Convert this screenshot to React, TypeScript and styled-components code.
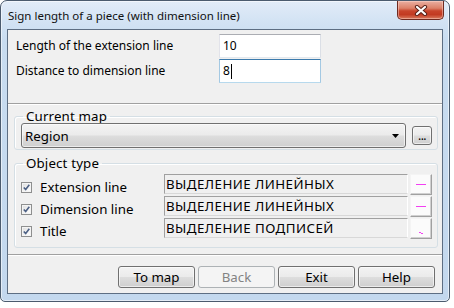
import React from 'react';
import styled, { createGlobalStyle } from 'styled-components';

const Global = createGlobalStyle`
  html, body { margin: 0; padding: 0; background: #ffffff; }
  body { font-family: "Noto Sans", "Liberation Sans", sans-serif; color: #000; }
  #root { width: 454px; height: 308px; }
`;

const Window = styled.div`
  box-sizing: border-box;
  width: 450px;
  height: 302px;
  border: 1px solid #4b5b6e;
  border-radius: 7px 7px 5px 5px;
  background: linear-gradient(180deg, #e2ecf8 0px, #d3e3f4 20px, #c8dcf0 40px, #c3d8ee 100%);
  box-shadow: inset 0 0 0 1px rgba(255, 255, 255, 0.55);
  padding: 0 6px 7px 6px;
  display: flex;
  flex-direction: column;
`;

const TitleBar = styled.div`
  height: 28px;
  display: flex;
  justify-content: space-between;
  align-items: flex-start;
`;

const TitleText = styled.span`
  font-size: 11.5px;
  line-height: 16px;
  padding: 7px 0 0 1px;
  color: #111;
  white-space: nowrap;
`;

const CloseButton = styled.div`
  box-sizing: border-box;
  width: 47px;
  height: 19px;
  margin-right: -1px;
  border: 1px solid #6e2a20;
  border-top: none;
  border-radius: 0 0 5px 5px;
  background: linear-gradient(180deg, #eab0a2 0%, #dc8068 40%, #c8442b 55%, #c23a22 75%, #d97a5e 100%);
  box-shadow: inset 0 0 0 1px rgba(255, 220, 210, 0.45);
  display: flex;
  align-items: center;
  justify-content: center;
`;

const Client = styled.div`
  flex: 1;
  display: flex;
  flex-direction: column;
  border: 1px solid #5d6e83;
  background: #f0f0f0;
  min-height: 0;
`;

const TopPanel = styled.div`
  box-sizing: border-box;
  height: 74px;
  border-bottom: 1px solid #a0a0a0;
  padding: 4px 8px 0 8px;
  display: grid;
  grid-template-columns: 203px 102px;
  grid-auto-rows: 24px;
  row-gap: 1px;
  align-content: start;
`;

const FieldLabel = styled.span`
  font-size: 12px;
  line-height: 16px;
  align-self: center;
  white-space: nowrap;
`;

const TextBox = styled.div<{ $focused?: boolean }>`
  box-sizing: border-box;
  height: 24px;
  background: #fff;
  border: 1px solid;
  border-color: ${(p) =>
    p.$focused ? '#3d7bad #a4c9e3 #b7d9ed #a4c9e3' : '#abadb3 #dbdfe6 #e3e9ef #e2e3ea'};
  font-size: 12px;
  line-height: 22px;
  padding-left: 3px;
  display: flex;
  align-items: center;
`;

const Caret = styled.span`
  display: inline-block;
  width: 1px;
  height: 15px;
  background: #000;
  margin-left: 1px;
`;

const MiddlePanel = styled.div`
  flex: 1;
  border-top: 1px solid #ffffff;
  border-bottom: 1px solid #a0a0a0;
  padding: 4px 4px 0 6px;
  display: flex;
  flex-direction: column;
`;

const Group = styled.fieldset<{ $bottom: number; $top: number }>`
  margin: 0 0 6px 0;
  padding: ${(p) => p.$top}px 5px ${(p) => p.$bottom}px 6px;
  border: 1px solid #d5dfe5;
  border-radius: 3px;
  min-inline-size: 0;
  box-shadow: inset 1px 1px 0 #ffffff;
`;

const Legend = styled.legend`
  margin-left: 2px;
  padding: 0 3px;
  font-size: 13.3px;
  line-height: 14px;
  letter-spacing: 0.15px;
`;

const ComboRow = styled.div`
  display: flex;
  align-items: center;
  gap: 6px;
`;

const Combo = styled.div`
  box-sizing: border-box;
  flex: 1;
  height: 25px;
  border: 1px solid #707070;
  border-radius: 3px;
  background: linear-gradient(180deg, #f3f3f3 0%, #ebebeb 48%, #dddddd 52%, #cfcfcf 100%);
  box-shadow: inset 0 0 0 1px rgba(255, 255, 255, 0.6);
  display: flex;
  align-items: center;
  justify-content: space-between;
  padding: 0 6px 0 3px;
  font-size: 13.3px;
`;

const SmallButton = styled.div`
  box-sizing: border-box;
  width: 20px;
  height: 19px;
  border: 1px solid #707070;
  border-radius: 3px;
  background: linear-gradient(180deg, #f3f3f3 0%, #ebebeb 48%, #dddddd 52%, #cfcfcf 100%);
  box-shadow: inset 0 0 0 1px rgba(255, 255, 255, 0.6);
  font-size: 12px;
  line-height: 10px;
  text-align: center;
  padding-top: 4px;
  letter-spacing: -0.5px;
`;

const Rows = styled.div`
  display: flex;
  flex-direction: column;
  gap: 2px;
`;

const Row = styled.div`
  display: flex;
  align-items: flex-start;
  height: 20px;
`;

const CheckBox = styled.div`
  box-sizing: border-box;
  width: 11px;
  height: 11px;
  margin-top: 8px;
  margin-right: 8px;
  border: 1px solid #8e8f8f;
  background: linear-gradient(135deg, #dcdcdc 0%, #f4f4f4 60%, #ffffff 100%);
  box-shadow: inset 0 0 0 1px #f4f4f4;
  display: flex;
  align-items: center;
  justify-content: center;
`;

const RowLabel = styled.span`
  width: 124px;
  font-size: 13.3px;
  line-height: 20px;
  padding-top: 3px;
  white-space: nowrap;
`;

const LayerField = styled.div`
  box-sizing: border-box;
  width: 244px;
  height: 20px;
  border: 1px solid;
  border-color: #a0a0a0 #ffffff #d8d8d8 #a0a0a0;
  background: #f0f0f0;
  font-size: 13.3px;
  letter-spacing: 0.45px;
  line-height: 18px;
  padding-left: 1px;
  white-space: nowrap;
  overflow: hidden;
`;

const ColorButton = styled.div`
  box-sizing: border-box;
  width: 22px;
  height: 21px;
  margin-left: 2px;
  border: 1px solid;
  border-color: #f4f4f4 #a0a0a0 #a0a0a0 #f4f4f4;
  box-shadow: inset -1px -1px 0 #d0d0d0;
  background: #fbfbfb;
  display: flex;
  align-items: center;
  justify-content: center;
`;

const BottomPanel = styled.div`
  box-sizing: border-box;
  height: 38px;
  border-top: 1px solid #ffffff;
  padding: 10px 7px 0 0;
  display: flex;
  justify-content: flex-end;
  align-items: flex-start;
  gap: 3px;
`;

const Button = styled.div<{ $disabled?: boolean }>`
  box-sizing: border-box;
  width: 77px;
  height: 22px;
  border: 1px solid ${(p) => (p.$disabled ? '#adb2b5' : '#707070')};
  border-radius: 3px;
  background: ${(p) =>
    p.$disabled
      ? '#f4f4f4'
      : 'linear-gradient(180deg, #f3f3f3 0%, #ebebeb 48%, #dddddd 52%, #cfcfcf 100%)'};
  box-shadow: inset 0 0 0 1px ${(p) => (p.$disabled ? 'transparent' : 'rgba(255,255,255,0.6)')};
  color: ${(p) => (p.$disabled ? '#838383' : '#000')};
  font-size: 13.3px;
  line-height: 20px;
  text-align: center;
`;

const CheckMark = () => (
  <svg width="7" height="7" viewBox="0 0 7 7">
    <path d="M0.8 3.4 L2.7 5.6 L6.3 0.8" fill="none" stroke="#4d6185" strokeWidth="1.6" />
  </svg>
);

const Dash = () => (
  <svg width="12" height="3" viewBox="0 0 12 3">
    <rect x="1" y="1" width="10" height="1" fill="#f23ff2" />
  </svg>
);

const Tick = () => (
  <svg width="12" height="14" viewBox="0 0 12 14">
    <rect x="4" y="10" width="2" height="1" fill="#f23ff2" />
    <rect x="6" y="11" width="2" height="1" fill="#f23ff2" />
  </svg>
);

const rows = [
  { label: 'Extension line', layer: 'ВЫДЕЛЕНИЕ ЛИНЕЙНЫХ', icon: <Dash /> },
  { label: 'Dimension line', layer: 'ВЫДЕЛЕНИЕ ЛИНЕЙНЫХ', icon: <Dash /> },
  { label: 'Title', layer: 'ВЫДЕЛЕНИЕ ПОДПИСЕЙ', icon: <Tick /> },
];

export default function App() {
  return (
    <>
      <Global />
      <Window>
        <TitleBar>
          <TitleText>Sign length of a piece (with dimension line)</TitleText>
          <CloseButton>
            <svg width="14" height="11" viewBox="0 0 14 11">
              <path d="M3 2 L11 9 M11 2 L3 9" stroke="#5a2219" strokeWidth="4.2" strokeLinecap="round" />
              <path d="M3 2 L11 9 M11 2 L3 9" stroke="#ffffff" strokeWidth="2.2" strokeLinecap="round" />
            </svg>
          </CloseButton>
        </TitleBar>
        <Client>
          <TopPanel>
            <FieldLabel>Length of the extension line</FieldLabel>
            <TextBox>10</TextBox>
            <FieldLabel>Distance to dimension line</FieldLabel>
            <TextBox $focused>
              8<Caret />
            </TextBox>
          </TopPanel>
          <MiddlePanel>
            <Group $top={0} $bottom={1}>
              <Legend>Current map</Legend>
              <ComboRow>
                <Combo>
                  <span>Region</span>
                  <svg width="7" height="4" viewBox="0 0 7 4">
                    <path d="M0 0 H7 L3.5 4 Z" fill="#000" />
                  </svg>
                </Combo>
                <SmallButton>...</SmallButton>
              </ComboRow>
            </Group>
            <Group $top={4} $bottom={9}>
              <Legend>Object type</Legend>
              <Rows>
                {rows.map((r) => (
                  <Row key={r.label}>
                    <CheckBox>
                      <CheckMark />
                    </CheckBox>
                    <RowLabel>{r.label}</RowLabel>
                    <LayerField>{r.layer}</LayerField>
                    <ColorButton>{r.icon}</ColorButton>
                  </Row>
                ))}
              </Rows>
            </Group>
          </MiddlePanel>
          <BottomPanel>
            <Button>To map</Button>
            <Button $disabled>Back</Button>
            <Button>Exit</Button>
            <Button>Help</Button>
          </BottomPanel>
        </Client>
      </Window>
    </>
  );
}
